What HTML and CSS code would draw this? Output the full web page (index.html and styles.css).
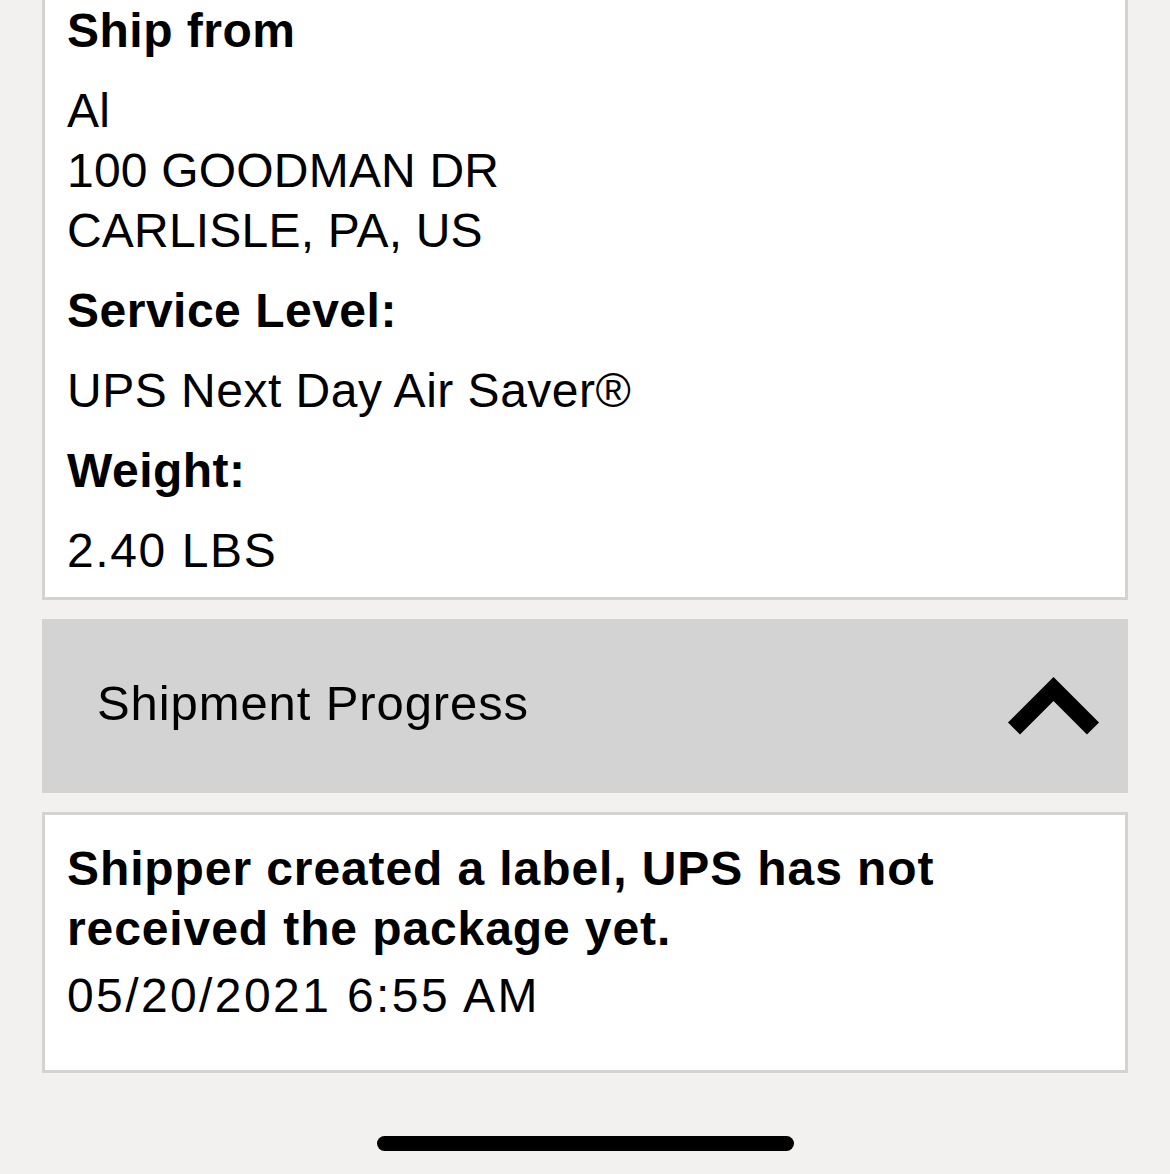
FILE: index.html
```html
<!DOCTYPE html>
<html lang="en">
<head>
<meta charset="utf-8">
<title>Shipment details</title>
<link rel="stylesheet" href="styles.css">
</head>
<body>
<main class="page">
  <section class="card card-top">
    <h2 class="label">Ship from</h2>
    <p class="value value-address">Al<br>100 GOODMAN DR<br>CARLISLE, PA, US</p>
    <h2 class="label">Service Level:</h2>
    <p class="value">UPS Next Day Air Saver®</p>
    <h2 class="label">Weight:</h2>
    <p class="value value-weight">2.40&nbsp;LBS</p>
  </section>

  <div class="accordion">
    <span class="accordion-title">Shipment Progress</span>
    <svg class="chevron" width="100" height="70" viewBox="0 0 100 70" aria-hidden="true">
      <polyline points="11,55.5 50.5,16 90,55.5" fill="none" stroke="#000" stroke-width="17" stroke-linecap="butt" stroke-linejoin="miter"/>
    </svg>
  </div>

  <section class="card card-progress">
    <p class="status">Shipper created a label, UPS has not received the package yet.</p>
    <p class="date">05/20/2021 6:55 AM</p>
  </section>

  <div class="home-bar"><span class="home-indicator"></span></div>
</main>
</body>
</html>
```

FILE: styles.css
```css
html, body {
  margin: 0;
  padding: 0;
  background: #f2f1ef;
}

body {
  font-family: "Liberation Sans", Arial, sans-serif;
  color: #000;
  width: 1170px;
  height: 1174px;
  overflow: hidden;
}

.page {
  display: flex;
  flex-direction: column;
  padding: 0 42px;
}

.card {
  background: #fff;
  border: 3px solid #d3d3d3;
  padding: 0 22px;
}

.card-top {
  border-top: none;
  padding-top: 1px;
  padding-bottom: 16px;
  display: flex;
  flex-direction: column;
  gap: 20px;
}

.label {
  margin: 0;
  font-size: 48px;
  font-weight: 700;
  line-height: 60px;
  letter-spacing: 0.5px;
}

.value {
  margin: 0;
  font-size: 48px;
  font-weight: 400;
  line-height: 60px;
  letter-spacing: 0.5px;
}

.value-address {
  letter-spacing: 0.2px;
}

.value-weight {
  letter-spacing: 1.6px;
}

.accordion {
  margin-top: 19px;
  height: 174px;
  background: #d3d3d3;
  display: flex;
  align-items: center;
  justify-content: space-between;
  padding: 0 25px 0 55px;
}

.accordion-title {
  font-size: 49px;
  letter-spacing: 0.9px;
  line-height: 60px;
  margin-top: -6px;
}

.chevron {
  display: block;
  margin-top: 4px;
}

.card-progress {
  margin-top: 19px;
  padding-top: 24px;
  padding-bottom: 44px;
}

.status {
  margin: 0;
  font-size: 48px;
  font-weight: 700;
  line-height: 60px;
  letter-spacing: 0.9px;
  max-width: 900px;
}

.date {
  margin: 7px 0 0;
  font-size: 48px;
  line-height: 60px;
  letter-spacing: 2.4px;
}

.home-bar {
  display: flex;
  justify-content: center;
  padding-top: 63px;
}

.home-indicator {
  display: block;
  width: 417px;
  height: 15px;
  border-radius: 8px;
  background: #000;
}
```
